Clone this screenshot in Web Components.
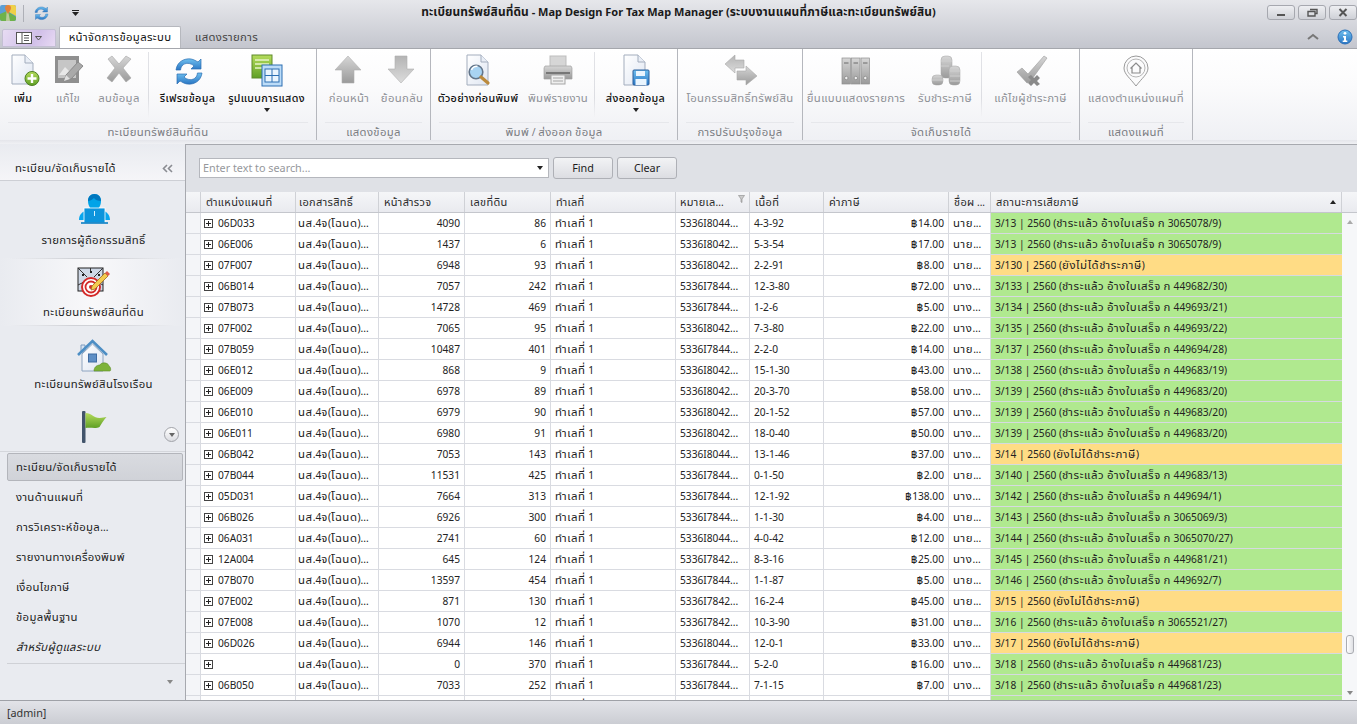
<!DOCTYPE html>
<html lang="th"><head><meta charset="utf-8"><title>Map Design For Tax Map Manager</title>
<style>
html,body{margin:0;padding:0;background:#e9ebf0;overflow:hidden}
body{font-family:"Noto Sans","Noto Sans Thai",Tahoma,sans-serif;font-size:10.3px;color:#1c1c1c}
</style></head><body>
<app-root></app-root>
<script>
const GRAD=`<defs>
<linearGradient id="gy" x1="0" y1="0" x2="0" y2="1"><stop offset="0" stop-color="#d6d6d6"/><stop offset="1" stop-color="#9a9a9a"/></linearGradient>
<linearGradient id="gd" x1="0" y1="0" x2="0" y2="1"><stop offset="0" stop-color="#b4b4b4"/><stop offset="1" stop-color="#dcdcdc"/></linearGradient>
<linearGradient id="bl" x1="0" y1="0" x2="0" y2="1"><stop offset="0" stop-color="#6fc0ef"/><stop offset="1" stop-color="#2a76c4"/></linearGradient>
<linearGradient id="gr" x1="0" y1="0" x2="0" y2="1"><stop offset="0" stop-color="#b5dc5c"/><stop offset="1" stop-color="#5f9f25"/></linearGradient>
<linearGradient id="doc" x1="0" y1="0" x2="1" y2="1"><stop offset="0" stop-color="#fff"/><stop offset="1" stop-color="#dfe6f2"/></linearGradient>
</defs>`;
const ICONS={
add:`<path d="M5 0h13l8 8v21H5z" fill="url(#doc)" stroke="#a3adbd"/><path d="M18 0v8h8" fill="#e9eef6" stroke="#a3adbd"/><circle cx="25" cy="23.500" r="7" fill="url(#gr)" stroke="#4d7f22"/><path d="M25 19v9M20.500 23.500h9" stroke="#fff" stroke-width="2.400"/>`,
edit:`<rect x="3" y="1" width="24" height="27" fill="#8f8f8f"/><rect x="6" y="5" width="18" height="18" fill="#c6c6c6"/><path d="M7 20l6-8 4 4 3-2 3 6z" fill="#e8e8e8"/><path d="M12 26l2-6L26 7l5 4-12 13z" fill="#a9a9a9" stroke="#8a8a8a"/><path d="M12 26l2-6 4 4z" fill="#e0e0e0"/>`,
del:`<path d="M6 4l4-3 7 8 7-8 5 3-8 9 8 10-5 4-7-9-7 9-5-4 8-10z" transform="translate(-1 0)" fill="url(#gy)" stroke="#a5a5a5" stroke-width=".6"/>`,
refresh:`<path d="M4 15C5 7 12 3 19 4c3 .5 5 2 7 3l3-3v10H19l3-3c-3-3-9-4-12 0-1 1-1.400 3-1.400 4z" fill="url(#bl)" stroke="#2c6fb2" stroke-width=".7"/><path d="M30 18c-1 8-8 12-15 11-3-.5-5-2-7-3l-3 3V19h10l-3 3c3 3 9 4 12 0 1-1 1.400-3 1.400-4z" fill="url(#bl)" stroke="#2c6fb2" stroke-width=".7"/>`,
layout:`<rect x="1" y="0" width="20" height="23" fill="url(#gr)" stroke="#5f8a2a"/><path d="M4 5h14M4 9h14M4 13h9" stroke="#e7f3c8" stroke-width="1.500"/><rect x="11" y="10" width="20" height="21" fill="#bcdcf8" stroke="#2c6fb2"/><rect x="14" y="14" width="14" height="13" fill="#eaf5fe" stroke="#2c6fb2"/><path d="M21 14v13M14 20.500h14" stroke="#2c6fb2"/>`,
up:`<path d="M15 1L28 15H21V28H9V15H2z" fill="url(#gy)" stroke="#b0b0b0" stroke-width=".6"/>`,
down:`<path d="M9 1H21V14H28L15 28 2 14H9z" fill="url(#gd)" stroke="#b0b0b0" stroke-width=".6"/>`,
preview:`<path d="M5 0h14l7 7v23H5z" fill="url(#doc)" stroke="#a3adbd"/><path d="M19 0v7h7" fill="#e9eef6" stroke="#a3adbd"/><circle cx="14" cy="17" r="6.800" fill="#a8d3f2" stroke="#62758a" stroke-width="1.600"/><path d="M9.500 15c1-3 4-4 6-3.500" stroke="#fff" stroke-width="1.500" fill="none"/><path d="M19 22l7 6" stroke="#bb8a3c" stroke-width="3.200" stroke-linecap="round"/>`,
print:`<rect x="8" y="1" width="16" height="11" fill="#d6d6d6" stroke="#bdbdbd"/><path d="M3 11h26l1 2v11H2V13z" fill="url(#gy)" stroke="#a0a0a0" stroke-width=".7"/><rect x="9" y="20" width="14" height="9" fill="#efefef" stroke="#a5a5a5"/><rect x="4" y="17" width="24" height="2" fill="#777"/><path d="M11 23h10M11 26h10" stroke="#a5a5a5"/>`,
exp:`<path d="M4 0h14l7 7v23H4z" fill="url(#doc)" stroke="#a3adbd"/><path d="M18 0v7h7" fill="#e9eef6" stroke="#a3adbd"/><rect x="13" y="15" width="16" height="15" rx="1" fill="url(#bl)" stroke="#2b5e9c"/><rect x="16" y="16" width="9" height="5" fill="#eaf5fe"/><rect x="15.500" y="24" width="11" height="6" fill="#eaf5fe"/>`,
transfer:`<path d="M1 9L11 0v5h9l0 8h-9v5z" fill="url(#gd)" stroke="#aaa" stroke-width=".6"/><path d="M33 21L22 30v-5h-9v-9h9v-5z" fill="url(#gy)" stroke="#aaa" stroke-width=".6"/>`,
binders:`<g fill="url(#gy)" stroke="#8f8f8f" stroke-width=".7"><rect x="2" y="3" width="8.500" height="26"/><rect x="11.500" y="3" width="8.500" height="26"/><rect x="21" y="3" width="8.500" height="26"/></g><g stroke="#6b6b6b"><path d="M4 8h4.500M13.500 8H18M23 8h4.500"/></g><g fill="#eee" stroke="#777" stroke-width=".6"><circle cx="6.300" cy="23" r="1.700"/><circle cx="15.800" cy="23" r="1.700"/><circle cx="25.300" cy="23" r="1.700"/></g>`,
coins:`<g fill="url(#gy)" stroke="#a5a5a5" stroke-width=".5"><rect x="12" y="1" width="11" height="22" rx="4"/><rect x="20" y="11" width="11" height="19" rx="4"/><rect x="3" y="20" width="11" height="10" rx="4"/></g><g stroke="#cfcfcf" fill="none"><path d="M12 6h11M12 11h8M21 16h10M21 21h10M21 26h10M3 25h11"/></g>`,
check:`<path d="M2 17l5-4 6 6L29 1l3 2-17 24-3 1z" fill="url(#gy)" stroke="#9c9c9c" stroke-width=".6"/><path d="M16 20l3 3 3-3 3 3-3 3 3 3-3 2-3-3-3 3-3-3 3-3-3-3z" fill="#8a8a8a"/>`,
pin:`<path d="M16 31C10 23 4 19 4 13a12 12 0 1 1 24 0c0 6-6 10-12 18z" fill="#fbfbfc" stroke="#9a9a9a"/><circle cx="16" cy="13" r="9" fill="none" stroke="#b5b5b5"/><path d="M10.500 13.500L16 8l5.500 5.500M12 12.500V18h8v-5.500" fill="none" stroke="#8b8b8b" stroke-width="1.200"/>`,
person:`<path d="M11 8c0-4 2.500-7 6.500-7S24 4 24 8s-2 9-6.500 9S11 12 11 8z" fill="#00a3e8"/><path d="M11 8c2 0 4-1 6-3 1 2 4 3 7 3 0-4-2.500-7-6.500-7S11 4 11 8z" fill="#0077be"/><path d="M2 27c0-6 4-9 9-10l6.500 4L24 17c5 1 9 4 9 10z" fill="#08a6ee"/><rect x="7" y="15" width="21" height="15" fill="#0c94dc" stroke="#fff" stroke-width=".8"/><path d="M4 30h27" stroke="#0a7fc4" stroke-width="1.600"/><path d="M17.500 18v5" stroke="#d8f2ff"/>`,
target:`<rect x="1" y="1" width="25" height="23" fill="#cfd8e6" stroke="#222"/><path d="M1 1l9 9M26 1l-9 9M13.500 1v5M1 18l6-3M26 18l-6-3" stroke="#333"/><g fill="#222"><rect x="5" y="7" width="2" height="2"/><rect x="13" y="4" width="2" height="2"/><rect x="21" y="7" width="2" height="2"/><rect x="5" y="15" width="2" height="2"/><rect x="21" y="15" width="2" height="2"/></g><circle cx="14" cy="20" r="9" fill="#fff" stroke="#d42a2a" stroke-width="2"/><circle cx="14" cy="20" r="5.500" fill="none" stroke="#d42a2a" stroke-width="1.800"/><circle cx="14" cy="20" r="2" fill="#d42a2a"/><path d="M15 19L28 6l3 3-13 13-4 1z" fill="#f3cb4f" stroke="#a06a1c" stroke-width=".8"/><path d="M28 6l2-2 3 3-2 2z" fill="#e05a4a"/>`,
house:`<path d="M4 6h4v7H4z" fill="#d8e3f1" stroke="#7c9cc0"/><path d="M5 15v17h21V15L15.500 5z" fill="url(#doc)" stroke="#8ea4bf"/><path d="M1 16L15.500 2 30 16" fill="none" stroke="#4d8ec4" stroke-width="2.600"/><rect x="11.500" y="15" width="8" height="8" fill="#5f8fc5" stroke="#3f6ca2"/><path d="M17 32c0-4 3-6 6-6 1-3 8-3 9 1 2 1 2 5 1 5z" fill="#7db33a" stroke="#5e8f27" stroke-width=".6"/>`,
flag:`<rect x="5" y="0" width="3.500" height="32" rx="1" fill="#42546b"/><path d="M8.500 2c6 0 8 5 14 5 3 0 5-1 7-1-3 3-5 7-7 10-4 2-9 0-14 1z" fill="url(#gr)"/>`,
app:`<rect x="0" y="0" width="16" height="16" rx="2" fill="#5b9fd6"/><path d="M7 0h7a2 2 0 0 1 2 2v9L7 6z" fill="#f0d048"/><path d="M0 9l7-3 9 6v2a2 2 0 0 1-2 2H2a2 2 0 0 1-2-2z" fill="#6fb24a"/><path d="M7 0L10 16H6z" fill="#d9d6b8" opacity=".7"/><path d="M5 3a3 3 0 0 1 6 0c0 2-2 4-3 6-1-2-3-4-3-6z" fill="#e2813a"/>`,
info:`<circle cx="8" cy="8" r="7" fill="url(#bl)" stroke="#2b6fb8"/><circle cx="8" cy="4.300" r="1.400" fill="#fff"/><path d="M6 7h3v4.500h1.300V13H5.700v-1.500H7V8.500H6z" fill="#fff"/>`
};
const TH=s=>s.replace(/>([^<]*)</g,(m,t)=>'>'+t.replace(/[\u0E00-\u0E7F]+/g,r=>`<span class="th">${r}</span>`)+'<');
function def(name,css,html,init){
  customElements.define(name,class extends HTMLElement{
    connectedCallback(){
      if(this.shadowRoot)return;
      const s=this.attachShadow({mode:'open'});
      s.innerHTML=`<style>.th{font-size:1.1em;letter-spacing:.03em}${css}</style>`+TH('>'+(typeof html==='function'?html(this):html)+'<').slice(1,-1);
      if(init)init(this,s);
    }
  });
}
def('ic-on',`:host{display:block;line-height:0}svg{display:block;overflow:visible}`,
 h=>{const z=h.getAttribute('size')||32,v=h.getAttribute('vb')||'0 0 32 32';
 return `<svg width="${z}" height="${z}" viewBox="${v}">${GRAD}${ICONS[h.getAttribute('name')]}</svg>`});

def('title-bar',`:host{display:grid;grid-template-columns:1fr auto 1fr;align-items:center;height:26px}
 .th{font-size:1.08em;letter-spacing:.01em}
 .l{display:flex;align-items:center}.sep{width:1px;height:17px;background:#aeb0b7;margin:0 9px 0 7px}
 .tri{margin-left:23px;width:7px;height:6px;display:block}
 .t{font-weight:700;font-size:11px;color:#1a1a1a;white-space:nowrap;padding-bottom:3px}
 .r{display:flex;justify-content:flex-end;gap:3px;padding-bottom:2px}
 b{width:26px;height:13px;border:1px solid #a6a8af;border-radius:3px;background:linear-gradient(#eeeff2,#cfd1d7);display:flex;align-items:center;justify-content:center}
 svg{display:block}`,
 `<div class="l"><ic-on name="app" size="16" vb="0 0 16 16"></ic-on><span class="sep"></span><ic-on name="refresh" size="16"></ic-on><svg class="tri" viewBox="0 0 7 6"><path d="M0 0h7v1H0zM0 2h7L3.500 6z" fill="#222"/></svg></div>
 <div class="t">ทะเบียนทรัพย์สินที่ดิน - Map Design For Tax Map Manager (ระบบงานแผนที่ภาษีและทะเบียนทรัพย์สิน)</div>
 <div class="r"><b><svg width="11" height="9"><path d="M1 7h8" stroke="#555" stroke-width="2"/></svg></b><b><svg width="11" height="9"><path d="M3 1.500h7v4H8M1 3.500h7v4.500H1z" fill="none" stroke="#555" stroke-width="1.400"/></svg></b><b><svg width="11" height="9"><path d="M1.500 1l7 7M8.500 1l-7 7" stroke="#555" stroke-width="2"/></svg></b></div>`);

def('tab-bar',`:host{display:flex;align-items:flex-end;height:22px;padding-left:2px;position:relative}
 .app{width:54px;height:18px;margin:0 3px 1px 0;border:1px solid #c3bfd3;box-sizing:border-box;border-radius:2px 2px 0 0;background:linear-gradient(120deg,#e7dcf3,#d0bfe8 60%,#e8daf4);display:flex;align-items:center;justify-content:center;gap:3px}
 .tab{height:22px;display:flex;align-items:center;justify-content:center;font-size:10.300px}
 .on{width:122px;background:#fff;border:1px solid #b6b8be;border-bottom:0;border-radius:2px 2px 0 0;box-sizing:border-box;color:#111}
 .off{width:91px;color:#444}
 .right{margin-left:auto;display:flex;align-items:center;gap:18px;height:22px;padding-right:4px}`,
 `<div class="app"><svg width="16" height="12"><rect x=".5" y=".5" width="15" height="11" fill="#fff" stroke="#555"/><path d="M6 1v10M8 3.500h5M8 6h5M8 8.500h5" stroke="#555"/></svg><svg width="7" height="5"><path d="M.5.500h6L3.500 4z" fill="none" stroke="#555"/></svg></div>
 <div class="tab on">หน้าจัดการข้อมูลระบบ</div><div class="tab off">แสดงรายการ</div>
 <div class="right"><svg width="12" height="8"><path d="M1 6l5-4 5 4" fill="none" stroke="#777" stroke-width="2"/></svg><ic-on name="info" size="16" vb="0 0 16 16"></ic-on></div>`);

def('rib-bon',`:host{display:flex;height:92px;background:linear-gradient(#fff 0,#fbfbfc 40%,#eff0f4);border-top:1px solid #a5a7ad;box-sizing:border-box}`,`<slot></slot>`);
def('rib-group',`:host{display:flex;flex-direction:column;height:91px;border-right:1px solid #b5b7bd;box-sizing:border-box;flex:none}
 .b{display:flex;height:73px}.l{margin:0 8px;border-top:1px solid #e6e7eb;height:17px;line-height:18px;text-align:center;color:#7a7c82;font-size:10.300px;white-space:nowrap}`,
 h=>`<div class="b"><slot></slot></div><div class="l">${h.getAttribute('label')}</div>`);
def('rib-btn',`:host{display:flex;flex-direction:column;align-items:center;flex:none;color:#111;white-space:nowrap;font-size:9.800px;font-weight:500}
 :host([off]){color:#8e9096;font-weight:400;font-size:10.300px}
 .i{height:35px;margin-top:4px;display:flex;align-items:center;justify-content:center}
 .t{height:15px;line-height:15px;margin-top:2px}
 .a{margin-top:3px;width:0;height:0;border:3.500px solid transparent;border-top:4px solid #222;border-bottom:0}`,
 h=>`<div class="i"><ic-on name="${h.getAttribute('icon')}" size="32"></ic-on></div><div class="t"><slot></slot></div>${h.hasAttribute('drop')?'<div class="a"></div>':''}`);
def('rib-sep',`:host{display:block;flex:none;width:1px;height:66px;margin:3px 0 0;background:linear-gradient(#e2e3e7,#dcdde2 70%,transparent)}`,``);

def('side-bar',`:host{display:flex;flex-direction:column;width:186px;flex:none;background:#e9ebf0;border-right:1px solid #a7a9af;box-sizing:border-box;height:556px;overflow:hidden}
 .h{height:37px;flex:none;display:flex;align-items:center;justify-content:space-between;padding:12px 12px 0 15px;box-sizing:border-box;background:linear-gradient(#e9ebf0,#f5f5f8);border-bottom:1px solid #cdcfd5;color:#1c1c1c;font-size:10.300px}
 .sc{position:relative;height:270px;flex:none;overflow:hidden;border-bottom:1px solid #d4d6db}
 .c{position:absolute;left:164px;top:246px;width:13px;height:13px;border-radius:50%;border:1px solid #a1a3a9;background:linear-gradient(#fff,#dcdde2);display:flex;align-items:center;justify-content:center}
 .c i{width:0;height:0;border:3px solid transparent;border-top:4px solid #666;border-bottom:0}
 .l{display:flex;flex-direction:column;padding:1px 2px 0 7px;flex:none}
 .b{margin-top:auto;border-top:1px solid #cfd1d6;flex:1;margin-left:7px;display:flex;justify-content:flex-end;align-items:center;padding-right:12px}
 .b i{width:0;height:0;border:3.500px solid transparent;border-top:4px solid #888;border-bottom:0}`,
 `<div class="h"><span>ทะเบียน/จัดเก็บรายได้</span><svg width="11" height="9"><path d="M5 1L1.500 4.500 5 8M10 1L6.500 4.500 10 8" fill="none" stroke="#8a8c92" stroke-width="1.600"/></svg></div>
 <div class="sc">
 <nav-big icon="person" h="77" pt="11" gap="6">รายการผู้ถือกรรมสิทธิ์</nav-big>
 <nav-big icon="target" h="68" pt="8" gap="4" hot>ทะเบียนทรัพย์สินที่ดิน</nav-big>
 <nav-big icon="house" h="75" pt="12" gap="4">ทะเบียนทรัพย์สินโรงเรือน</nav-big>
 <nav-big icon="flag" h="50" pt="9"></nav-big>
 <span class="c"><i></i></span>
 </div>
 <div class="l"><nav-item sel>ทะเบียน/จัดเก็บรายได้</nav-item><nav-item>งานด้านแผนที่</nav-item><nav-item>การวิเคราะห์ข้อมูล...</nav-item><nav-item>รายงานทางเครื่องพิมพ์</nav-item><nav-item>เงื่อนไขภาษี</nav-item><nav-item>ข้อมูลพื้นฐาน</nav-item><nav-item it>สำหรับผู้ดูแลระบบ</nav-item></div>
 <div class="b"><i></i></div>`);
def('nav-big',`:host{display:flex;flex-direction:column;align-items:center;box-sizing:border-box;flex:none;font-size:10.300px;color:#1c1c1c;white-space:nowrap;padding-left:2px}
 :host([hot]){background:linear-gradient(90deg,transparent 5%,#cfd1d6 40%,#cfd1d6 60%,transparent 95%) top/100% 1px no-repeat,linear-gradient(90deg,transparent 5%,#cfd1d6 40%,#cfd1d6 60%,transparent 95%) bottom/100% 1px no-repeat,linear-gradient(90deg,#e9ebf0 0,#f8f8fa 50%,#e9ebf0 100%)}
 .t{line-height:15px}`,
 h=>{h.style.height=h.getAttribute('h')+'px';h.style.paddingTop=h.getAttribute('pt')+'px';
 return `<ic-on name="${h.getAttribute('icon')}" size="34" vb="0 0 34 32"></ic-on><div class="t" style="margin-top:${h.getAttribute('gap')||6}px"><slot></slot></div>`});
def('nav-item',`:host{display:flex;align-items:center;height:28px;margin-bottom:2px;box-sizing:border-box;padding-left:8px;border:1px solid transparent;border-radius:2px;font-size:10.300px;color:#1c1c1c;white-space:nowrap}
 :host([sel]){background:linear-gradient(#d9dbe0,#d0d2d8);border-color:#b3b5bb}
 :host([it]){font-style:italic}`,`<slot></slot>`);

def('search-panel',`:host{display:flex;align-items:center;height:48px;flex:none;background:#dfe1e6;padding:0 0 2px 13px;gap:4px;box-sizing:border-box;border-top:1px solid #a7a9af}
 .cb{width:350px;height:20px;box-sizing:border-box;background:#fff;border:1px solid #b5b7bd;display:flex;align-items:center;justify-content:space-between;padding:0 5px 0 3px;color:#96989c;font-size:10.800px}
 .cb i{width:0;height:0;border:3.500px solid transparent;border-top:4px solid #222;border-bottom:0}
 button{all:unset;box-sizing:border-box;width:60px;height:22px;border:1px solid #aeb0b6;border-radius:3px;background:linear-gradient(#f2f3f5,#dcdde2);text-align:center;line-height:20px;font:inherit;font-size:10.800px;color:#1c1c1c}`,
 `<div class="cb"><span>Enter text to search...</span><i></i></div><button>Find</button><button>Clear</button>`);

const COLS=[15,95,83,86,86,125,74,74,125,42,351];
const GT=COLS.map(c=>c+'px').join(' ');
def('grid-head',`:host{display:grid;grid-template-columns:${GT} 1fr;height:21px;flex:none;background:linear-gradient(#f5f6f8,#e9eaef);border-bottom:1px solid #c4c6cc;box-sizing:border-box;font-size:10px;color:#2a2a2a}
 div{border-right:1px solid #cfd1d6;padding:0 5px;line-height:20px;white-space:nowrap;overflow:hidden;display:flex;justify-content:space-between;align-items:center;box-sizing:border-box}
 div.p2{padding-left:3px}
 div:last-child{border:0} i{width:0;height:0;border:3.500px solid transparent;border-bottom:4px solid #222;border-top:0}`,
 `<div></div><div>ตำแหน่งแผนที่</div><div class="p2">เอกสารสิทธิ์</div><div>หน้าสำรวจ</div><div>เลขที่ดิน</div><div>ทำเลที่</div>
 <div style="padding-left:4px"><span>หมายเล...</span><svg width="7" height="8" style="margin-right:-1px;margin-top:-6px"><path d="M.5.500h6L4 4v3.500L3 7V4z" fill="#ccc" stroke="#888" stroke-width=".6"/></svg></div><div>เนื้อที่</div><div>ค่าภาษี</div><div>ชื่อผ...</div><div><span>สถานะการเสียภาษี</span><i></i></div><div></div>`);
def('grid-row',`:host{display:grid;grid-template-columns:${GT};height:21px;flex:none;box-sizing:border-box;font-size:10.200px;color:#222}
 .th{font-size:1.12em;letter-spacing:.05em}
 div{border-right:1px solid #d9dbe1;border-bottom:1px solid #d9dbe1;padding:0 4px;line-height:20px;white-space:nowrap;overflow:hidden;box-sizing:border-box;height:21px}
 .ind{background:#f4f5f8;padding:0}.n{text-align:right}
 .k{display:flex;align-items:center;padding-left:3px;gap:5px}
 .k svg{flex:none}
 .p2{padding-left:2px;padding-right:0}
 .s{border-right:0;padding-left:4px}`,
 h=>{const d=h.data;const c=d[7].startsWith('!')?'#ffdc85':'#b0e98f';
 if(d.length===9)return `<div class="ind"></div><div></div><div></div><div></div><div></div><div>ทำเลที่ 1</div><div></div><div></div><div></div><div></div><div class="s" style="background:${c}"></div>`;
 return `<div class="ind"></div><div class="k"><svg width="9" height="9"><rect x=".5" y=".5" width="8" height="8" fill="#fff" stroke="#444"/><path d="M2 4.500h5M4.500 2v5" stroke="#222"/></svg><span>${d[0]}</span></div><div class="p2">นส.4จ(โฉนด)...</div><div class="n">${d[1]}</div><div class="n">${d[2]}</div><div>ทำเลที่ 1</div><div>${d[3]}...</div><div>${d[4]}</div><div class="n">฿${d[5]}</div><div>${d[6]}...</div><div class="s" style="background:${c};border-bottom-color:#d6dae0">${d[7].replace('!','')}</div>`});

const P=(a,r)=>`${a} | 2560 (ชำระแล้ว อ้างใบเสร็จ ก ${r})`, U=a=>`!${a} | 2560 (ยังไม่ได้ชำระภาษี)`;
const A='5336I8044',B='5336I8042',C='5336I7844',D='5336I7842',M='นาย',F='นาง';
const DATA=[
['06D033',4090,86,A,'4-3-92','14.00',M,P('3/13','3065078/9')],
['06E006',1437,6,B,'5-3-54','17.00',M,P('3/13','3065078/9')],
['07F007',6948,93,B,'2-2-91','8.00',M,U('3/130')],
['06B014',7057,242,C,'12-3-80','72.00',F,P('3/133','449682/30')],
['07B073',14728,469,C,'1-2-6','5.00',F,P('3/134','449693/21')],
['07F002',7065,95,B,'7-3-80','22.00',F,P('3/135','449693/22')],
['07B059',10487,401,C,'2-2-0','14.00',M,P('3/137','449694/28')],
['06E012',868,9,B,'15-1-30','43.00',F,P('3/138','449683/19')],
['06E009',6978,89,B,'20-3-70','58.00',F,P('3/139','449683/20')],
['06E010',6979,90,B,'20-1-52','57.00',F,P('3/139','449683/20')],
['06E011',6980,91,B,'18-0-40','50.00',F,P('3/139','449683/20')],
['06B042',7053,143,A,'13-1-46','37.00',F,U('3/14')],
['07B044',11531,425,C,'0-1-50','2.00',M,P('3/140','449683/13')],
['05D031',7664,313,C,'12-1-92','138.00',F,P('3/142','449694/1')],
['06B026',6926,300,C,'1-1-30','4.00',M,P('3/143','3065069/3')],
['06A031',2741,60,A,'4-0-42','12.00',M,P('3/144','3065070/27')],
['12A004',645,124,D,'8-3-16','25.00',F,P('3/145','449681/21')],
['07B070',13597,454,C,'1-1-87','5.00',M,P('3/146','449692/7')],
['07E002',871,130,D,'16-2-4','45.00',M,U('3/15')],
['07E008',1070,12,D,'10-3-90','31.00',M,P('3/16','3065521/27')],
['06D026',6944,146,A,'12-0-1','33.00',F,U('3/17')],
['',0,370,C,'5-2-0','16.00',F,P('3/18','449681/23')],
['06B050',7033,252,C,'7-1-15','7.00',F,P('3/18','449681/23')],
['','','','','','','','','x']
];
def('scroll-bar',`:host{display:flex;flex-direction:column;align-items:center;width:15px;flex:none;background:#f6f7f9;box-sizing:border-box;height:488px}
 .u{margin-top:7px;width:0;height:0;border:3.500px solid transparent;border-bottom:4px solid #aaa;border-top:0}
 .t{margin-top:411px;width:6px;height:17px;border:1px solid #aaacb2;border-radius:3px;background:linear-gradient(90deg,#fff,#dfe0e4)}
 .d{margin-top:37px;width:0;height:0;border:3.500px solid transparent;border-top:4px solid #888;border-bottom:0}`,
 `<span class="u"></span><span class="t"></span><span class="d"></span>`);
def('data-grid',`:host{display:flex;flex-direction:column;flex:1;min-height:0;background:#fff;overflow:hidden}
 .b{display:flex;flex:1;min-height:0;overflow:hidden}.r{display:flex;flex-direction:column;overflow:hidden;width:1156px;flex:none}`,
 `<grid-head></grid-head><div class="b"><div class="r"></div><scroll-bar></scroll-bar></div>`,
 (h,s)=>{const r=s.querySelector('.r');DATA.forEach(d=>{const e=document.createElement('grid-row');e.data=d;r.appendChild(e)})});
def('status-bar',`:host{display:flex;align-items:center;height:24px;flex:none;padding-left:7px;background:linear-gradient(#e2e3e8,#cbcdd3);border-top:1px solid #9fa1a7;box-sizing:border-box;font-size:10.800px;color:#333}`,`<slot></slot>`);

def('app-root',`:host{display:flex;flex-direction:column;width:1357px;height:724px;overflow:hidden}
 .top{background:linear-gradient(#e6e7eb,#c4c6ce);flex:none}
 .gap{height:4px;flex:none;background:linear-gradient(#e4e5ea,#f0f1f4)}
 .m{display:flex;height:556px;flex:none}.c{display:flex;flex-direction:column;flex:1;min-width:0;height:556px}`,
 `<div class="top"><title-bar></title-bar><tab-bar></tab-bar></div>
 <rib-bon>
 <rib-group label="ทะเบียนทรัพย์สินที่ดิน" style="width:317px"><rib-btn icon="add" style="width:46px">เพิ่ม</rib-btn><rib-btn icon="edit" off style="width:44px">แก้ไข</rib-btn><rib-btn icon="del" off style="width:58px">ลบข้อมูล</rib-btn><rib-sep></rib-sep><rib-btn icon="refresh" style="width:77px">รีเฟรชข้อมูล</rib-btn><rib-btn icon="layout" drop style="width:81px">รูปแบบการแสดง</rib-btn></rib-group>
 <rib-group label="แสดงข้อมูล" style="width:114px"><rib-btn icon="up" off style="width:60px;margin-left:2px">ก่อนหน้า</rib-btn><rib-btn icon="down" off style="width:46px">ย้อนกลับ</rib-btn></rib-group>
 <rib-group label="พิมพ์ / ส่งออก ข้อมูล" style="width:247px"><rib-btn icon="preview" style="width:88px;margin-left:3px">ตัวอย่างก่อนพิมพ์</rib-btn><rib-btn icon="print" off style="width:72px">พิมพ์รายงาน</rib-btn><rib-sep></rib-sep><rib-btn icon="exp" drop style="width:81px">ส่งออกข้อมูล</rib-btn></rib-group>
 <rib-group label="การปรับปรุงข้อมูล" style="width:125px"><rib-btn icon="transfer" off style="width:124px">โอนกรรมสิทธิ์ทรัพย์สิน</rib-btn></rib-group>
 <rib-group label="จัดเก็บรายได้" style="width:277px"><rib-btn icon="binders" off style="width:106px">ยื่นแบบแสดงรายการ</rib-btn><rib-btn icon="coins" off style="width:72px">รับชำระภาษี</rib-btn><rib-sep></rib-sep><rib-btn icon="check" off style="width:97px">แก้ไขผู้ชำระภาษี</rib-btn></rib-group>
 <rib-group label="แสดงแผนที่" style="width:113px"><rib-btn icon="pin" off style="width:112px">แสดงตำแหน่งแผนที่</rib-btn></rib-group>
 </rib-bon>
 <div class="gap"></div>
 <div class="m"><side-bar></side-bar><div class="c"><search-panel></search-panel><data-grid></data-grid></div></div>
 <status-bar>[admin]</status-bar>`);
</script>
</body></html>
